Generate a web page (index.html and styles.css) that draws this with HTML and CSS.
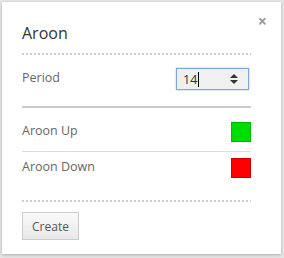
FILE: index.html
```html
<!DOCTYPE html>
<html lang="en">
<head>
    <meta charset="UTF-8">
    <title>Aroon</title>
    <link rel="stylesheet" href="styles.css">
</head>
<body>
    <div class="dialog">
        <span class="close">&times;</span>
        <h2 class="title">Aroon</h2>
        <div class="dots"></div>

        <div class="row period">
            <span class="label">Period</span>
            <div class="spin">
                <span class="value">14</span><span class="caret"></span>
                <svg class="arrows" width="8" height="10" viewBox="0 0 8 10">
                    <path d="M4 0 L8 4 L0 4 Z" fill="#333"/>
                    <path d="M0 6 L8 6 L4 10 Z" fill="#333"/>
                </svg>
            </div>
        </div>

        <div class="rule"></div>

        <div class="row color-row">
            <span class="label">Aroon Up</span>
            <span class="swatch green"></span>
        </div>
        <div class="thin"></div>
        <div class="row color-row second">
            <span class="label">Aroon Down</span>
            <span class="swatch red"></span>
        </div>

        <div class="dots bottom"></div>

        <button class="create">Create</button>
    </div>
</body>
</html>
```

FILE: styles.css
```css
body {
    margin: 0;
    background: #e6e6e6;
    font-family: 'Open Sans', sans-serif;
    height: 258px;
    overflow: hidden;
}

.dialog {
    position: relative;
    box-sizing: border-box;
    margin: 2px 0 0 2px;
    width: 279px;
    height: 252px;
    padding: 20px 30px 0 20px;
    background: #fff;
    box-shadow: 0 1px 3px rgba(0, 0, 0, 0.25);
}

.close {
    position: absolute;
    top: 9px;
    right: 14px;
    font-size: 16px;
    font-weight: bold;
    color: #999;
    line-height: 20px;
}

.title {
    margin: 0;
    font-size: 16px;
    font-weight: normal;
    color: #333;
    line-height: 22px;
}

.dots {
    height: 2px;
    margin-top: 9px;
    background: repeating-linear-gradient(to right, #ccc 0 2px, transparent 2px 4px);
}

.row {
    display: flex;
    justify-content: space-between;
    align-items: flex-start;
}

.label {
    font-size: 12.5px;
    color: #666;
    line-height: 18px;
}

.period {
    padding: 14px 2px 16px 0;
}

.spin {
    box-sizing: border-box;
    width: 73px;
    height: 22px;
    margin-top: -1px;
    display: flex;
    align-items: center;
    padding: 0 10px 0 6px;
    background: #f0f0f0;
    border: 1px solid #7ba4e0;
    box-shadow: 0 0 2px #a9c6f0;
    font-size: 12.5px;
    color: #333;
}

.caret {
    width: 1px;
    height: 15px;
    background: #000;
    margin-left: 1px;
}

.arrows {
    margin-left: auto;
}

.rule {
    height: 2px;
    background: #ccc;
}

.color-row {
    padding: 14px 0 9px 0;
}

.color-row.second {
    padding: 6px 0 0 0;
}

.swatch {
    box-sizing: border-box;
    width: 20px;
    height: 20px;
}

.green {
    background: #00dd00;
    border: 1px solid #00b800;
}

.red {
    background: #ff0000;
    border: 1px solid #d00000;
}

.thin {
    height: 1px;
    background: #ddd;
}

.dots.bottom {
    margin-top: 22px;
}

.create {
    display: block;
    margin-top: 10px;
    width: 57px;
    height: 28px;
    font-family: 'Open Sans', sans-serif;
    font-size: 12px;
    color: #555;
    background: linear-gradient(to bottom, #fafafa, #e8e8e8);
    border: 1px solid #ccc;
    border-radius: 0;
    padding: 0;
}
```
